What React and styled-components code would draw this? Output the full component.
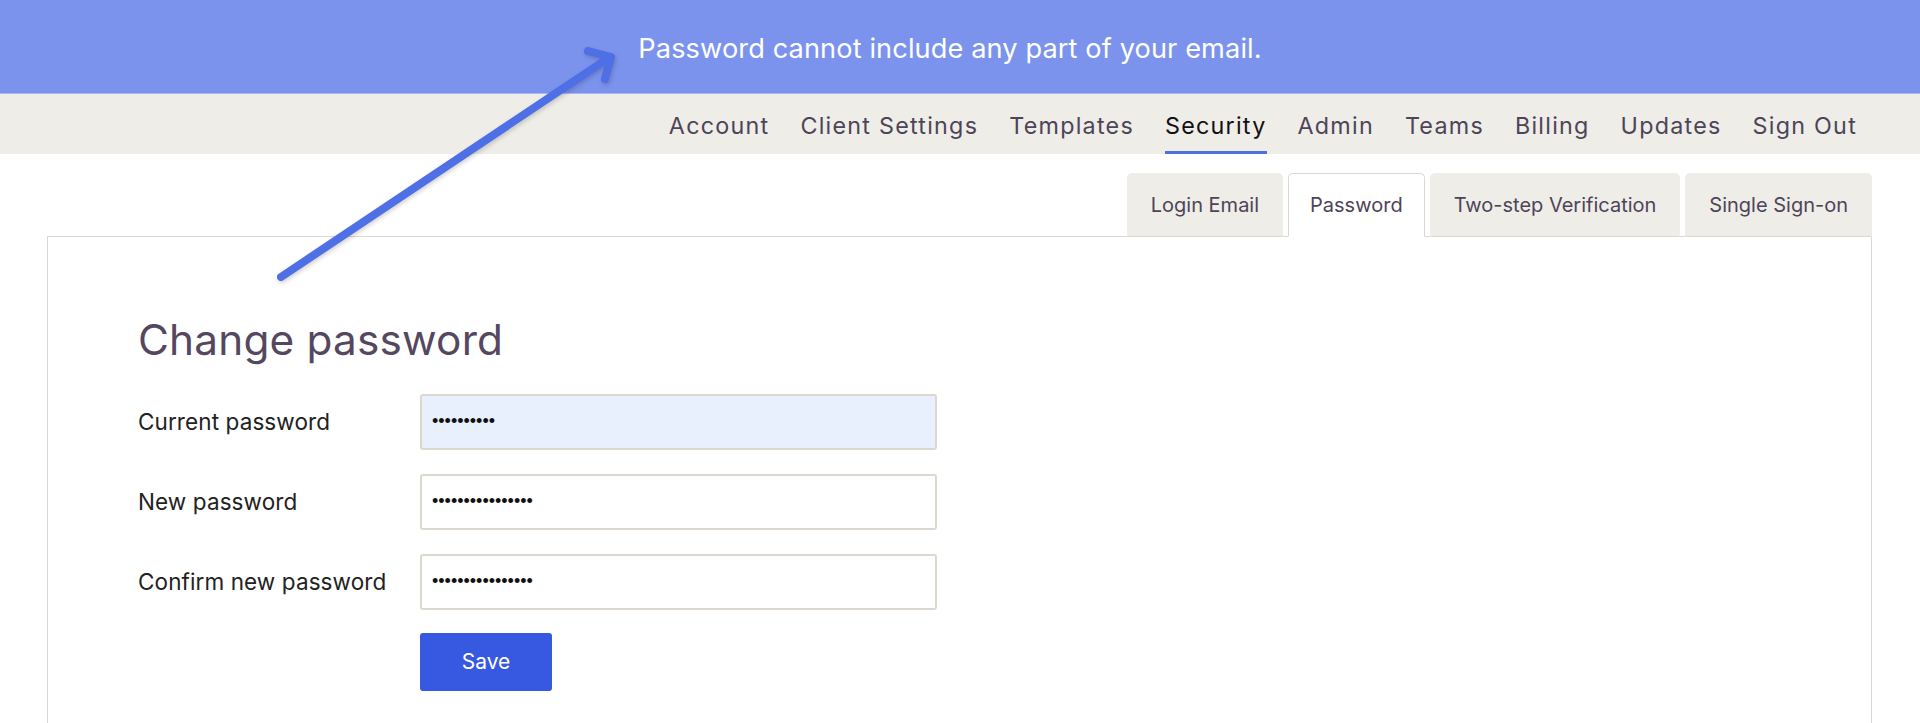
import React from "react";
import styled, { createGlobalStyle } from "styled-components";

const Global = createGlobalStyle`
  html, body { margin: 0; padding: 0; background: #ffffff; }
  body { font-family: "Inter", "Noto Sans", sans-serif; }
  * { box-sizing: border-box; }
`;

const Page = styled.div`
  position: relative;
  width: 1920px;
  height: 723px;
  overflow: hidden;
  background: #ffffff;
`;

const Banner = styled.div`
  height: 94px;
  background: #7b93ec;
  border-bottom: 1px solid #a9b8f0;
  display: flex;
  align-items: center;
  justify-content: center;
  padding: 3px 20px 0 0;
  color: #ffffff;
  font-size: 27.2px;
  letter-spacing: 0.1px;
`;

const Nav = styled.nav`
  height: 60px;
  background: #eeede8;
  display: flex;
  justify-content: flex-end;
  align-items: stretch;
  gap: 31px;
  padding-right: 63px;
`;

const NavItem = styled.a`
  display: flex;
  align-items: center;
  font-size: 23.3px;
  letter-spacing: 1.25px;
  color: ${(p) => (p.$active ? "#111111" : "#4e4458")};
  border-bottom: 3px solid ${(p) => (p.$active ? "#4f6fe0" : "transparent")};
  padding-top: 5px;
  text-decoration: none;
  cursor: pointer;
`;

const Main = styled.div`
  padding: 19px 48px 0 47px;
`;

const Tabs = styled.div`
  display: flex;
  justify-content: flex-end;
  gap: 5px;
  position: relative;
  z-index: 1;
  margin-bottom: -1px;
`;

const Tab = styled.div`
  height: 64px;
  padding: 0 ${(p) => (p.$active ? "21px" : "23px")};
  display: flex;
  align-items: center;
  font-size: 20px;
  color: #4e4458;
  border-radius: 5px 5px 0 0;
  background: ${(p) => (p.$active ? "#ffffff" : "#eeede8")};
  border: 1px solid ${(p) => (p.$active ? "#dcd8cf" : "#eeede8")};
  border-bottom: 1px solid ${(p) => (p.$active ? "#ffffff" : "#dcd8cf")};
  cursor: pointer;
`;

const Panel = styled.section`
  border: 1px solid #dcd8cf;
  border-bottom: none;
  height: 520px;
  padding: 78px 0 0 90px;
`;

const Heading = styled.h1`
  margin: 0 0 28px;
  font-size: 42.3px;
  font-weight: 400;
  line-height: 1.2;
  color: #554760;
  letter-spacing: 0.2px;
`;

const Form = styled.form`
  display: grid;
  grid-template-columns: 282px 517px;
  row-gap: 24px;
  align-items: center;
`;

const Label = styled.label`
  font-size: 22.5px;
  color: #222222;
  letter-spacing: 0.1px;
`;

const Input = styled.input`
  height: 56px;
  width: 517px;
  border: 2px solid #dcd8cf;
  border-radius: 3px;
  background: ${(p) => (p.$filled ? "#e8f0fe" : "#ffffff")};
  padding: 0 10px;
  font-family: "Liberation Sans", Arial, sans-serif;
  font-size: 18px;
  color: #111111;
  outline: none;
`;

const SaveButton = styled.button`
  grid-column: 2;
  justify-self: start;
  margin-top: -1px;
  width: 132px;
  height: 58px;
  border: none;
  border-radius: 3px;
  background: #3758e0;
  color: #ffffff;
  font-family: "Inter", sans-serif;
  font-size: 21px;
  cursor: pointer;
`;

const ArrowSvg = styled.svg`
  position: absolute;
  left: 0;
  top: 0;
  pointer-events: none;
  filter: drop-shadow(1px 2px 2px rgba(0, 0, 0, 0.18));
`;

const navItems = [
  "Account",
  "Client Settings",
  "Templates",
  "Security",
  "Admin",
  "Teams",
  "Billing",
  "Updates",
  "Sign Out",
];

const tabs = ["Login Email", "Password", "Two-step Verification", "Single Sign-on"];

export default function App() {
  return (
    <Page>
      <Global />
      <Banner>Password cannot include any part of your email.</Banner>
      <Nav>
        {navItems.map((n) => (
          <NavItem key={n} $active={n === "Security"}>
            {n}
          </NavItem>
        ))}
      </Nav>
      <Main>
        <Tabs>
          {tabs.map((t) => (
            <Tab key={t} $active={t === "Password"}>
              {t}
            </Tab>
          ))}
        </Tabs>
        <Panel>
          <Heading>Change password</Heading>
          <Form onSubmit={(e) => e.preventDefault()}>
            <Label>Current password</Label>
            <Input type="password" readOnly value="abcdefghij" $filled />
            <Label>New password</Label>
            <Input type="password" readOnly value="abcdefghijklmnop" />
            <Label>Confirm new password</Label>
            <Input type="password" readOnly value="abcdefghijklmnop" />
            <SaveButton type="submit">Save</SaveButton>
          </Form>
        </Panel>
      </Main>
      <ArrowSvg width="1920" height="723" viewBox="0 0 1920 723">
        <g stroke="#4e6fe5" strokeWidth="8" strokeLinecap="round" strokeLinejoin="round" fill="none">
          <line x1="281" y1="277" x2="610" y2="57" />
          <polyline points="588,51 611,57 605,79" />
        </g>
      </ArrowSvg>
    </Page>
  );
}
